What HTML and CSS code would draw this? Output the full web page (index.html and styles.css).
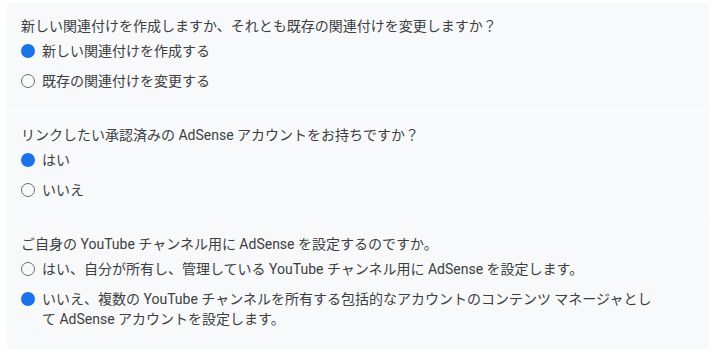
FILE: index.html
```html
<!DOCTYPE html>
<html lang="ja">
<head>
<meta charset="utf-8">
<link rel="stylesheet" href="styles.css">
</head>
<body>
<div class="panels">
  <section class="panel">
    <div class="question">新しい関連付けを作成しますか、それとも既存の関連付けを変更しますか？</div>
    <div class="option"><span class="radio checked"></span><span class="label">新しい関連付けを作成する</span></div>
    <div class="option"><span class="radio"></span><span class="label">既存の関連付けを変更する</span></div>
  </section>
  <section class="panel">
    <div class="question">リンクしたい承認済みの AdSense アカウントをお持ちですか？</div>
    <div class="option"><span class="radio checked"></span><span class="label">はい</span></div>
    <div class="option"><span class="radio"></span><span class="label">いいえ</span></div>
  </section>
  <section class="panel">
    <div class="question">ご自身の YouTube チャンネル用に AdSense を設定するのですか。</div>
    <div class="option"><span class="radio"></span><span class="label">はい、自分が所有し、管理している YouTube チャンネル用に AdSense を設定します。</span></div>
    <div class="option"><span class="radio checked"></span><span class="label narrow">いいえ、複数の YouTube チャンネルを所有する包括的なアカウントのコンテンツ マネージャとして AdSense アカウントを設定します。</span></div>
  </section>
</div>
</body>
</html>
```
FILE: styles.css
```css
html, body {
  background: #ffffff;
}
body {
  margin: 3px 7px;
  font-family: Roboto, "Noto Sans CJK JP", sans-serif;
  font-size: 14px;
  color: #3c4043;
}
.panels {
  display: flex;
  flex-direction: column;
  gap: 1px;
}
.panel {
  background: #f8f9fa;
  padding: 13px 14px 15px;
}
.question {
  line-height: 20px;
}
.option {
  display: flex;
  align-items: flex-start;
  gap: 7px;
  padding: 5px 0;
  line-height: 20px;
}
.radio {
  flex: none;
  width: 14px;
  height: 14px;
  box-sizing: border-box;
  border-radius: 50%;
  border: 1.5px solid #6b6e72;
  margin-top: 3px;
}
.radio.checked {
  border: none;
  background: #1a73e8;
}
.label.narrow {
  max-width: 620px;
}
```
